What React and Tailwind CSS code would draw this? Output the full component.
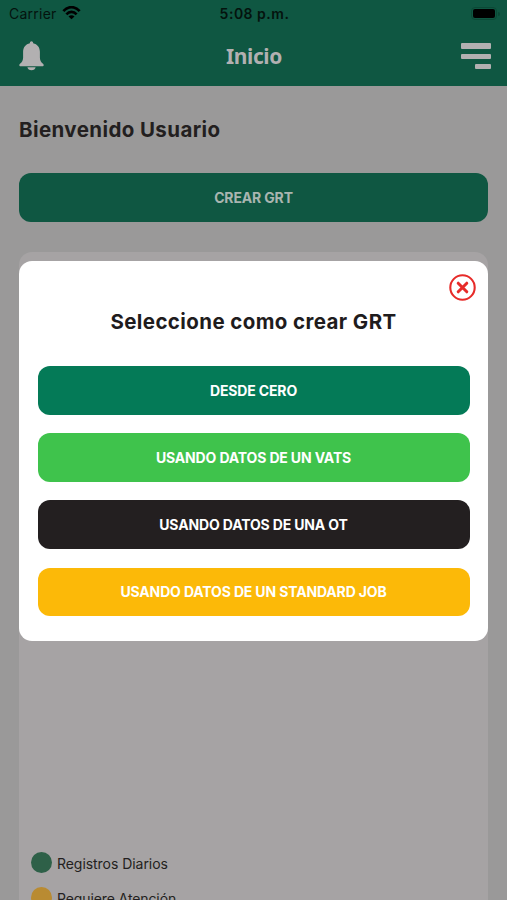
import React, { useState } from "react";

const options = [
  { label: "DESDE CERO", color: "bg-[#047a57]" },
  { label: "USANDO DATOS DE UN VATS", color: "bg-[#3fc34c]" },
  { label: "USANDO DATOS DE UNA OT", color: "bg-[#231f20]" },
  { label: "USANDO DATOS DE UN STANDARD JOB", color: "bg-[#fcb908]" },
];

const StatusBar = () => (
  <div className="grid h-[27px] grid-cols-3 items-center pl-[9px] pr-[7px] text-[14px] leading-none text-[#04130e]">
    <div className="flex items-center gap-[6px]">
      <span className="tracking-[0.25px]">Carrier</span>
      <svg className="-ml-px -mt-[2px] h-[14px] w-[19px]" viewBox="0 0 19 14" fill="none" stroke="#000" strokeWidth="2.7">
        <path d="M1.4 5.2C6-0.2 13-0.2 17.6 5.2" />
        <path d="M4.4 8.3c2.9-3.2 7.3-3.2 10.2 0" />
        <path d="M9.5 13.3 6.5 10.5c1.8-1.6 4.2-1.6 6 0Z" fill="#000" stroke="none" />
      </svg>
    </div>
    <span className="text-center font-semibold tracking-[0.5px]">5:08 p.m.</span>
    <div className="flex items-center justify-end gap-px">
      <div className="h-[13px] w-[26px] rounded-[4px] border border-[#0b4936] p-[1px]">
        <div className="h-full rounded-[2px] bg-black" />
      </div>
      <div className="h-[4px] w-[2px] rounded-r-full bg-[#0b4936]" />
    </div>
  </div>
);

const Header = () => (
  <header className="h-[86px] bg-[#0f5742]">
    <StatusBar />
    <div className="flex h-[58px] items-center justify-between pl-[19px] pr-4">
      <svg className="h-[30px] w-[25px]" viewBox="0 0 25 30" fill="#b2b0b1">
        <path d="M12.5 0.3c1 0 1.7.8 1.6 2 4.2.8 6.8 4.1 6.8 8.5v5.7c0 2.7.9 4.5 3.1 6.2 1.3 1 .8 2.6-.8 2.6H1.8c-1.6 0-2.1-1.6-.8-2.6 2.2-1.7 3.1-3.5 3.1-6.2v-5.7c0-4.4 2.6-7.7 6.8-8.5-.1-1.2.6-2 1.6-2Z" />
        <path d="M8.4 26.3h8.2c-.3 1.9-1.9 3-4.1 3s-3.8-1.1-4.1-3Z" />
      </svg>
      <h1 className="pl-[3px] pt-px font-['Noto_Sans',sans-serif] text-[21px] font-bold tracking-[-0.4px] text-[#b2b0b1]">
        Inicio
      </h1>
      <div className="flex w-[30px] flex-col items-end gap-[5px]">
        <div className="h-[6px] w-full rounded-[1px] bg-[#b2b0b1]" />
        <div className="h-[5px] w-full rounded-[1px] bg-[#b2b0b1]" />
        <div className="h-[5px] w-4 rounded-[1px] bg-[#b2b0b1]" />
      </div>
    </div>
  </header>
);

const Modal = ({ onClose }) => (
  <div className="absolute inset-x-[19px] top-[261px] h-[379.5px] rounded-[13px] bg-white px-[18.5px]">
    <div className="-mr-[6px] flex justify-end pt-[13px]">
      <button onClick={onClose} aria-label="Cerrar">
        <svg className="h-[27px] w-[27px]" viewBox="0 0 27 27" fill="none" stroke="#e72b29">
          <circle cx="13.5" cy="13.5" r="12.2" strokeWidth="2.1" />
          <path d="m9.2 9.2 8.6 8.6M17.8 9.2l-8.6 8.6" strokeWidth="3" strokeLinecap="round" />
        </svg>
      </button>
    </div>
    <h2 className="mt-[5px] text-center text-[20.5px] leading-[32px] font-bold tracking-[0.4px] text-[#1f1c1d]">
      Seleccione como crear GRT
    </h2>
    <div className="mt-[28px] flex flex-col gap-[18.5px]">
      {options.map((o) => (
        <button
          key={o.label}
          className={`${o.color} h-[48.7px] w-full rounded-[12px] text-[14px] font-bold tracking-[-0.15px] text-white`}
        >
          {o.label}
        </button>
      ))}
    </div>
  </div>
);

const App = () => {
  const [open, setOpen] = useState(true);

  return (
    <div className="relative flex h-[900px] w-full flex-col overflow-hidden bg-[#9a9999] font-['Inter',sans-serif]">
      <Header />
      <main className="flex flex-1 flex-col px-[19px]">
        <h2 className="mt-[28px] text-[20.5px] leading-[32px] font-bold tracking-[0.4px] text-[#231f20]">
          Bienvenido Usuario
        </h2>
        <button
          onClick={() => setOpen(true)}
          className="mt-[27px] h-[49px] shrink-0 rounded-[12px] bg-[#0f5742] text-[14px] font-bold tracking-[-0.15px] text-[#a9b5b0]"
        >
          CREAR GRT
        </button>
        <section className="mt-[30px] h-[648px] shrink-0 rounded-t-[13px] bg-[#a6a3a4] px-3 pt-[600px] text-[14px] leading-[21px] text-[#231f20]">
          <div className="flex h-[21px] items-center gap-[5px]">
            <span className="size-[21px] rounded-full bg-[#2e6048]" />
            <span className="pt-[2px] tracking-[-0.05px]">Registros Diarios</span>
          </div>
          <div className="mt-[14px] flex h-[21px] items-center gap-[5px]">
            <span className="size-[21px] rounded-full bg-[#b98b32]" />
            <span className="pt-px tracking-[-0.1px]">Requiere Atención</span>
          </div>
        </section>
      </main>
      {open && <Modal onClose={() => setOpen(false)} />}
    </div>
  );
};

export default App;
